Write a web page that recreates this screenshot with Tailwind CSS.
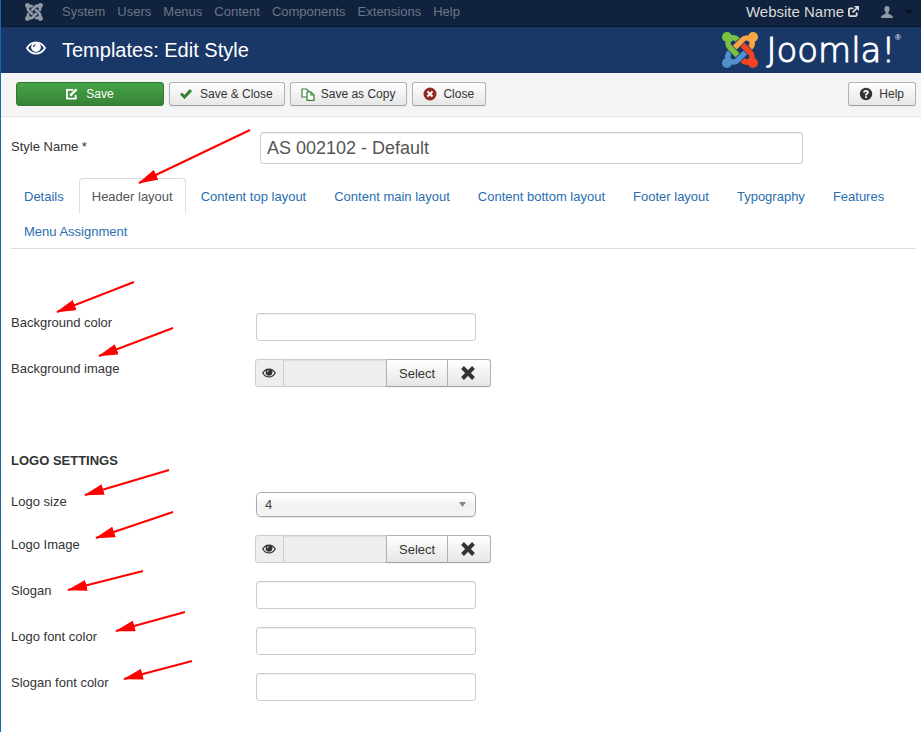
<!DOCTYPE html>
<html lang="en">
<head>
    <meta charset="UTF-8">
    <meta name="viewport" content="width=device-width, initial-scale=1.0">
    <title>Templates: Edit Style</title>
    <script src="https://cdn.jsdelivr.net/npm/@tailwindcss/browser@4"></script>
</head>
<body class="relative min-h-screen border-l border-[#1769a8] bg-white font-['Liberation_Sans',Arial,sans-serif] text-[13px] leading-5 text-[#333]">

    <!-- Shared icons -->
    <svg class="hidden" aria-hidden="true">
        <symbol id="arm" viewBox="0 0 24 24" overflow="visible">
            <circle cx="3.3" cy="20.7" r="3.3" stroke="none"/>
            <path fill="none" stroke-width="3.7" d="M5.2 13.6C3.4 15.2 3.4 17.4 4.9 18.9C6.4 20.4 8.7 20.4 10.2 18.9L15.5 13.6"/>
        </symbol>
        <symbol id="eye" viewBox="0 0 20 14">
            <path fill="none" stroke="currentColor" stroke-width="1.8" d="M1 7C3 3.500 6 1.300 10 1.300S17 3.500 19 7C17 10.500 14 12.600 10 12.600S3 10.500 1 7z"/>
            <path fill="currentColor" fill-rule="evenodd" d="M10 1.200a4.900 4.900 0 1 0 0 9.800a4.900 4.900 0 1 0 0-9.800zM9.800 3.200v1.100C8.800 4.300 8.200 4.900 8.200 5.900H7C7 4.300 8.200 3.200 9.800 3.200z"/>
        </symbol>
        <symbol id="cross" viewBox="0 0 14 14">
            <path stroke="currentColor" stroke-width="4" fill="none" d="M1.500 1.500l11 11M12.500 1.500l-11 11"/>
        </symbol>
    </svg>

    <nav class="flex h-[27px] items-center border-b border-[#0b1528] bg-[#10223e] pr-2 pb-[3px] pl-6 text-[#6b7686]">
        <a href="#" aria-label="Joomla" class="mr-[19px] block text-[#9099a6]">
            <svg class="h-[18px] w-[18px]" viewBox="0 0 24 24" fill="currentColor" stroke="currentColor">
                <use href="#arm"/>
                <use href="#arm" transform="rotate(90 12 12)"/>
                <use href="#arm" transform="rotate(180 12 12)"/>
                <use href="#arm" transform="rotate(270 12 12)"/>
            </svg>
        </a>
        <div class="flex gap-x-3">
            <a href="#">System</a>
            <a href="#">Users</a>
            <a href="#">Menus</a>
            <a href="#">Content</a>
            <a href="#">Components</a>
            <a href="#">Extensions</a>
            <a href="#">Help</a>
        </div>
        <a href="#" class="ml-auto flex items-center gap-1 text-[15px] text-[#d9d9d9]">
            Website Name
            <svg class="h-[11px] w-[11px]" viewBox="0 0 12 12" fill="none" stroke="currentColor" stroke-width="2">
                <path d="M6 2.500H2.500Q1 2.500 1 4V9.500Q1 11 2.500 11H8Q9.500 11 9.500 9.500V7M5 7L9.500 2.500"/>
                <path fill="currentColor" stroke="none" d="M6.500 0H12V5.500z"/>
            </svg>
        </a>
        <a href="#" aria-label="User menu" class="ml-[22px] flex items-center gap-3 text-[#9099a6]">
            <svg class="h-3 w-3" viewBox="0 0 12 12" fill="currentColor">
                <path d="M6 0C4.300 0 3.400 1.300 3.400 3c0 1.500.6 2.700 1.400 3.400v.8C4.600 8.300 0 8.300 0 12h12c0-3.700-4.600-3.700-4.800-4.800v-.8C8 5.700 8.600 4.500 8.600 3 8.600 1.300 7.700 0 6 0z"/>
            </svg>
            <svg class="h-1 w-2 text-[#0a0f18]" viewBox="0 0 8 4" fill="currentColor"><path d="M0 0h8L4 4z"/></svg>
        </a>
    </nav>

    <header class="flex h-[46px] items-center bg-[#1a3867] pr-5 pl-[25px] text-white">
        <svg class="mr-4 mb-1 h-[14px] w-5" aria-hidden="true"><use href="#eye"/></svg>
        <h1 class="text-xl">Templates: Edit Style</h1>
        <a href="#" aria-label="Joomla!" class="ml-auto flex items-center gap-2">
            <svg class="h-9 w-9" viewBox="0 0 24 24">
                <use href="#arm" fill="#f9a541" stroke="#f9a541" transform="rotate(180 12 12)"/>
                <use href="#arm" fill="#f44321" stroke="#f44321" transform="rotate(270 12 12)"/>
                <use href="#arm" fill="#5091cd" stroke="#5091cd"/>
                <use href="#arm" fill="#7ac143" stroke="#7ac143" transform="rotate(90 12 12)"/>
            </svg>
            <span class="flex">
                <span class="font-['DejaVu_Sans',sans-serif] text-[34px] leading-9 font-extralight [-webkit-text-stroke:1px_white]">Joomla!</span>
                <span class="text-[8px] leading-3">®</span>
            </span>
        </a>
    </header>

    <div class="flex h-11 items-center gap-[5px] border-b border-[#e3e3e3] bg-[#f5f5f5] pr-[5px] pb-px pl-[15px] text-xs">
        <button type="button" class="flex h-6 w-[148px] items-center justify-center gap-2 rounded-[3px] border border-[#2f7a2f] bg-linear-to-b from-[#46a546] to-[#378137] text-white">
            <svg class="h-3 w-3" viewBox="0 0 13 12" fill="none" stroke="currentColor" stroke-width="2">
                <path d="M8 1.500H1V11H10.500V7"/>
                <path d="M4.500 7.800L11.500 1" stroke-width="2.600"/>
            </svg>
            Save
        </button>
        <button type="button" class="flex h-6 items-center gap-2 rounded-[3px] border border-[#b3b3b3] border-b-[#a2a2a2] bg-linear-to-b from-white to-[#e6e6e6] pr-[11px] pl-[10px] shadow-xs">
            <svg class="h-3 w-3" viewBox="0 0 12 12" fill="none" stroke="#378137" stroke-width="3"><path d="M1 5.500l3.500 3.500L11 2"/></svg>
            Save &amp; Close
        </button>
        <button type="button" class="flex h-6 items-center gap-1 rounded-[3px] border border-[#b3b3b3] border-b-[#a2a2a2] bg-linear-to-b from-white to-[#e6e6e6] pr-[11px] pl-[10px] shadow-xs">
            <svg class="mr-px h-[13px] w-[15px]" viewBox="0 0 15 13" fill="#fff" stroke="#378137" stroke-width="1.200">
                <path d="M1 1h4.500L8 3.500V9H1z"/>
                <path d="M6 4h4l3 3v5.300H6z"/>
                <path d="M10 4v3h3" fill="none"/>
            </svg>
            Save as Copy
        </button>
        <button type="button" class="flex h-6 items-center gap-[6px] rounded-[3px] border border-[#b3b3b3] border-b-[#a2a2a2] bg-linear-to-b from-white to-[#e6e6e6] pr-[11px] pl-[10px] shadow-xs">
            <svg class="h-[14px] w-[14px]" viewBox="0 0 14 14"><circle cx="7" cy="7" r="6.500" fill="#942a25"/><path d="M4.500 4.500l5 5M9.500 4.500l-5 5" stroke="#fff" stroke-width="2"/></svg>
            Close
        </button>
        <button type="button" class="ml-auto flex h-6 items-center gap-[6px] rounded-[3px] border border-[#b3b3b3] border-b-[#a2a2a2] bg-linear-to-b from-white to-[#e6e6e6] pr-[11px] pl-[10px] shadow-xs">
            <svg class="h-[14px] w-[14px]" viewBox="0 0 14 14"><circle cx="7" cy="7" r="6.200" fill="#333"/><path d="M5 5.500Q5 3.800 7 3.800T9 5.500Q9 6.500 7 7.300V8.500M7 9.300V11" fill="none" stroke="#fff" stroke-width="1.700"/></svg>
            Help
        </button>
    </div>

    <form class="pt-[15px] pr-[5px] pl-[10px]">
        <div class="flex items-start">
            <label for="style-name" class="w-[249px] pt-[5px]">Style Name *</label>
            <input id="style-name" type="text" value="AS 002102 - Default" class="h-8 w-3/5 rounded-[3px] border border-[#ccc] px-[6px] text-lg text-[#555] shadow-[inset_0_1px_1px_rgba(0,0,0,0.075)]">
        </div>

        <div class="mt-[14px] flex flex-wrap gap-x-[2px] border-b border-[#ddd] text-[#2a6eb0]">
            <a href="#" class="px-[13px] pt-[9px] pb-[7px] leading-[19px]">Details</a>
            <a href="#" class="rounded-t-[4px] border border-b-0 border-[#ddd] px-3 pt-2 pb-[7px] leading-[19px] text-[#555]">Header layout</a>
            <a href="#" class="px-[13px] pt-[9px] pb-[7px] leading-[19px]">Content top layout</a>
            <a href="#" class="px-[13px] pt-[9px] pb-[7px] leading-[19px]">Content main layout</a>
            <a href="#" class="px-[13px] pt-[9px] pb-[7px] leading-[19px]">Content bottom layout</a>
            <a href="#" class="px-[13px] pt-[9px] pb-[7px] leading-[19px]">Footer layout</a>
            <a href="#" class="px-[13px] pt-[9px] pb-[7px] leading-[19px]">Typography</a>
            <a href="#" class="px-[13px] pt-[9px] pb-[7px] leading-[19px]">Features</a>
            <a href="#" class="px-[13px] pt-[9px] pb-[7px] leading-[19px]">Menu Assignment</a>
        </div>

        <div class="mt-16 flex flex-col gap-[18px]">
            <div class="flex items-start">
                <label for="bg-color" class="w-[245px]">Background color</label>
                <input id="bg-color" type="text" class="h-7 w-[220px] rounded-[3px] border border-[#ccc] px-[6px] shadow-[inset_0_1px_1px_rgba(0,0,0,0.075)]">
            </div>
            <div class="flex items-start">
                <label for="bg-image" class="w-[244px]">Background image</label>
                <div class="flex h-7">
                    <span class="flex w-[29px] items-center rounded-l-[3px] border border-[#ccc] bg-[#eee] pl-[6px]"><svg class="h-[10px] w-[14px]" aria-hidden="true"><use href="#eye"/></svg></span>
                    <input id="bg-image" type="text" readonly class="w-[102px] border-y border-[#ccc] bg-[#eee] px-[6px] shadow-[inset_0_1px_1px_rgba(0,0,0,0.075)]">
                    <button type="button" class="border border-[#b3b3b3] border-b-[#a2a2a2] bg-linear-to-b from-white to-[#e6e6e6] px-3 pt-px shadow-xs">Select</button>
                    <button type="button" aria-label="Clear background image" class="rounded-r-[3px] border border-l-0 border-[#b3b3b3] border-b-[#a2a2a2] bg-linear-to-b from-white to-[#e6e6e6] pr-[15px] pl-[13px] shadow-xs"><svg class="h-[14px] w-[14px]"><use href="#cross"/></svg></button>
                </div>
            </div>
        </div>

        <h2 class="mt-16 font-bold">LOGO SETTINGS</h2>

        <div class="mt-[21px] flex flex-col gap-[18px]">
            <div class="flex items-start">
                <label for="logo-size" class="w-[245px]">Logo size</label>
                <div class="relative">
                    <select id="logo-size" class="block h-[25px] w-[220px] appearance-none rounded-[5px] border border-[#aaa] bg-linear-to-b from-white from-20% via-[#f1f1f1] via-50% to-[#f4f4f4] pl-2 text-[#444] shadow-[0_1px_1px_rgba(0,0,0,0.1)]">
                        <option>4</option>
                    </select>
                    <svg class="pointer-events-none absolute top-[10px] right-[10px] h-[5px] w-[7px] text-[#888]" viewBox="0 0 7 5" fill="currentColor"><path d="M0 0h7L3.500 5z"/></svg>
                </div>
            </div>
            <div class="flex items-start">
                <label for="logo-image" class="w-[244px]">Logo Image</label>
                <div class="flex h-7">
                    <span class="flex w-[29px] items-center rounded-l-[3px] border border-[#ccc] bg-[#eee] pl-[6px]"><svg class="h-[10px] w-[14px]" aria-hidden="true"><use href="#eye"/></svg></span>
                    <input id="logo-image" type="text" readonly class="w-[102px] border-y border-[#ccc] bg-[#eee] px-[6px] shadow-[inset_0_1px_1px_rgba(0,0,0,0.075)]">
                    <button type="button" class="border border-[#b3b3b3] border-b-[#a2a2a2] bg-linear-to-b from-white to-[#e6e6e6] px-3 pt-px shadow-xs">Select</button>
                    <button type="button" aria-label="Clear logo image" class="rounded-r-[3px] border border-l-0 border-[#b3b3b3] border-b-[#a2a2a2] bg-linear-to-b from-white to-[#e6e6e6] pr-[15px] pl-[13px] shadow-xs"><svg class="h-[14px] w-[14px]"><use href="#cross"/></svg></button>
                </div>
            </div>
            <div class="flex items-start">
                <label for="slogan" class="w-[245px]">Slogan</label>
                <input id="slogan" type="text" class="h-7 w-[220px] rounded-[3px] border border-[#ccc] px-[6px] shadow-[inset_0_1px_1px_rgba(0,0,0,0.075)]">
            </div>
            <div class="flex items-start">
                <label for="logo-color" class="w-[245px]">Logo font color</label>
                <input id="logo-color" type="text" class="h-7 w-[220px] rounded-[3px] border border-[#ccc] px-[6px] shadow-[inset_0_1px_1px_rgba(0,0,0,0.075)]">
            </div>
            <div class="flex items-start">
                <label for="slogan-color" class="w-[245px]">Slogan font color</label>
                <input id="slogan-color" type="text" class="h-7 w-[220px] rounded-[3px] border border-[#ccc] px-[6px] shadow-[inset_0_1px_1px_rgba(0,0,0,0.075)]">
            </div>
        </div>
    </form>

    <!-- Annotation arrows, drawn over the form -->
    <svg class="pointer-events-none absolute top-0 left-0 h-[732px] w-[300px]" fill="none" stroke="#f00" stroke-width="2" aria-hidden="true">
        <defs>
            <marker id="head" markerUnits="userSpaceOnUse" markerWidth="20" markerHeight="11" refX="19" refY="5.5" orient="auto">
                <path d="M0 0L20 5.500L0 11z" fill="#f00" stroke="none"/>
            </marker>
        </defs>
        <path marker-end="url(#head)" d="M249 130L138 183"/>
        <path marker-end="url(#head)" d="M133 282L56 312"/>
        <path marker-end="url(#head)" d="M172 328L98 356"/>
        <path marker-end="url(#head)" d="M168 470L84 495"/>
        <path marker-end="url(#head)" d="M172 512L95 538"/>
        <path marker-end="url(#head)" d="M142 571L67 590"/>
        <path marker-end="url(#head)" d="M184 612L115 631"/>
        <path marker-end="url(#head)" d="M191 661L123 679"/>
    </svg>
</body>
</html>
